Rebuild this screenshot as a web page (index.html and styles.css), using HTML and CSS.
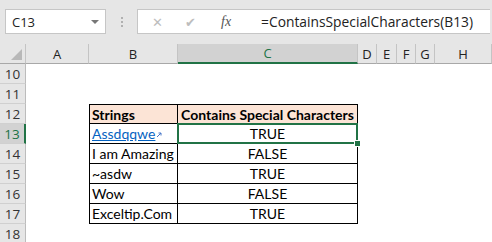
FILE: index.html
```html
<!DOCTYPE html>
<html lang="en">
<head>
    <meta charset="UTF-8">
    <title>ContainsSpecialCharacters</title>
    <link rel="stylesheet" href="styles.css">
</head>
<body>
    <!-- formula bar -->
    <div class="toolbar">
        <div class="name-box">
            <span>C13</span>
            <span class="drop"></span>
        </div>
        <div class="grip"><i></i><i></i><i></i></div>
        <div class="formula-box">
            <span class="btn x">&#x2715;</span>
            <span class="btn ok">&#x2714;</span>
            <span class="fx">fx</span>
            <span class="formula">=ContainsSpecialCharacters(B13)</span>
        </div>
    </div>

    <!-- sheet -->
    <div class="sheet">
        <div class="ch corner"></div>
        <div class="ch">A</div>
        <div class="ch">B</div>
        <div class="ch sel">C</div>
        <div class="ch">D</div>
        <div class="ch">E</div>
        <div class="ch">F</div>
        <div class="ch">G</div>
        <div class="ch">H</div>

        <div class="rh">10</div><div></div><div></div><div></div><div></div><div></div><div></div><div></div><div></div>
        <div class="rh">11</div><div></div><div></div><div></div><div></div><div></div><div></div><div></div><div></div>

        <div class="rh">12</div><div></div>
        <div class="tb head first top">Strings</div>
        <div class="tb head top center">Contains Special Characters</div>
        <div></div><div></div><div></div><div></div><div></div>

        <div class="rh sel">13</div><div></div>
        <div class="tb first"><span class="link">Assdqqwe</span><svg class="cur" width="6" height="6" viewBox="0 0 6 6"><path d="M1 5 L5 1 M2.5 1 H5 V3.5" stroke="#4a78c8" stroke-width="1" fill="none"/></svg></div>
        <div class="tb center active">TRUE</div>
        <div></div><div></div><div></div><div></div><div></div>

        <div class="rh">14</div><div></div>
        <div class="tb first">I am Amazing</div>
        <div class="tb center">FALSE</div>
        <div></div><div></div><div></div><div></div><div></div>

        <div class="rh">15</div><div></div>
        <div class="tb first">~asdw</div>
        <div class="tb center">TRUE</div>
        <div></div><div></div><div></div><div></div><div></div>

        <div class="rh">16</div><div></div>
        <div class="tb first">Wow</div>
        <div class="tb center">FALSE</div>
        <div></div><div></div><div></div><div></div><div></div>

        <div class="rh">17</div><div></div>
        <div class="tb first">Exceltip.Com</div>
        <div class="tb center">TRUE</div>
        <div></div><div></div><div></div><div></div><div></div>

        <div class="rh">18</div><div></div><div></div><div></div><div></div><div></div><div></div><div></div><div></div>
    </div>
</body>
</html>
```

FILE: styles.css
```css
body {
    margin: 0;
    padding: 0;
    background: #ffffff;
    font-family: Lato, "Liberation Sans", sans-serif;
    overflow: hidden;
}
/* formula bar */
.toolbar {
    height: 44px;
    background: #e6e6e6;
    display: flex;
    align-items: flex-start;
    padding: 9px 0 0 5px;
    box-sizing: border-box;
}
.name-box {
    width: 101px;
    height: 25px;
    box-sizing: border-box;
    background: white;
    border: 1px solid #c6c6c6;
    display: flex;
    align-items: center;
    justify-content: space-between;
    padding: 0 6px 0 6px;
    font-family: "Open Sans", sans-serif;
    font-size: 13px;
    color: #222;
}
.drop {
    width: 0;
    height: 0;
    border-left: 4px solid transparent;
    border-right: 4px solid transparent;
    border-top: 4px solid #777;
}
.grip {
    width: 31px;
    height: 25px;
    display: flex;
    flex-direction: column;
    align-items: center;
    justify-content: center;
    gap: 2px;
}
.grip i {
    width: 2px;
    height: 2px;
    background: #b0b0b0;
}
.formula-box {
    flex: 1;
    height: 25px;
    margin-right: 2px;
    box-sizing: border-box;
    background: white;
    border: 1px solid #c6c6c6;
    border-right: none;
    display: flex;
    align-items: center;
    font-family: "Open Sans", sans-serif;
}
.btn {
    color: #bdbdbd;
    font-size: 13px;
}
.x {
    margin-left: 14px;
}
.ok {
    margin-left: 22px;
}
.fx {
    margin-left: 25px;
    font-family: "Liberation Serif", serif;
    font-style: italic;
    font-size: 14px;
    color: #555;
}
.formula {
    margin-left: 30px;
    font-size: 13.8px;
    color: #222;
}
/* grid */
.sheet {
    display: grid;
    grid-template-columns: 26px 63px 89px 180px 19px 20px 19px 19px 1fr;
    grid-auto-rows: 20px;
    font-size: 14px;
    color: #000;
}
.ch {
    background: #e6e6e6;
    border-right: 1px solid #c4c4c4;
    border-bottom: 1px solid #a8a8a8;
    box-sizing: border-box;
    display: flex;
    align-items: center;
    justify-content: center;
    font-family: "Open Sans", sans-serif;
    font-size: 13px;
    color: #222;
}
.ch.sel {
    background: #d2d2d2;
    color: #217346;
    border-bottom: 2px solid #217346;
}
.corner {
    position: relative;
}
.corner::after {
    content: "";
    position: absolute;
    right: 3px;
    bottom: 3px;
    border-left: 11px solid transparent;
    border-bottom: 11px solid #b8b8b8;
}
.rh {
    background: #e6e6e6;
    border-right: 1px solid #bcbcbc;
    border-bottom: 1px solid #d0d0d0;
    box-sizing: border-box;
    display: flex;
    align-items: center;
    justify-content: center;
    font-family: "Open Sans", sans-serif;
    font-size: 13.5px;
    color: #333;
}
.rh.sel {
    background: #d2d2d2;
    color: #217346;
    border-right: 2px solid #217346;
}
.tb {
    border-right: 1px solid #000;
    border-bottom: 1px solid #000;
    box-sizing: border-box;
    display: flex;
    align-items: center;
    padding: 0 2px;
    white-space: nowrap;
}
.tb.first {
    border-left: 1px solid #000;
}
.tb.top {
    border-top: 1px solid #000;
}
.tb.head {
    background: #fce4d6;
    font-weight: bold;
}
.tb.center {
    justify-content: center;
}
.link {
    color: #0563c1;
    text-decoration: underline;
}
.cur {
    margin-left: 1px;
    margin-top: 3px;
}
/* selected cell */
.active {
    position: relative;
}
.active::before {
    content: "";
    position: absolute;
    left: -1px;
    top: -1px;
    right: -1px;
    bottom: -1px;
    border: 2px solid #217346;
}
.active::after {
    content: "";
    position: absolute;
    right: -4px;
    bottom: -4px;
    width: 5px;
    height: 5px;
    background: #217346;
    border: 1px solid white;
}
```
